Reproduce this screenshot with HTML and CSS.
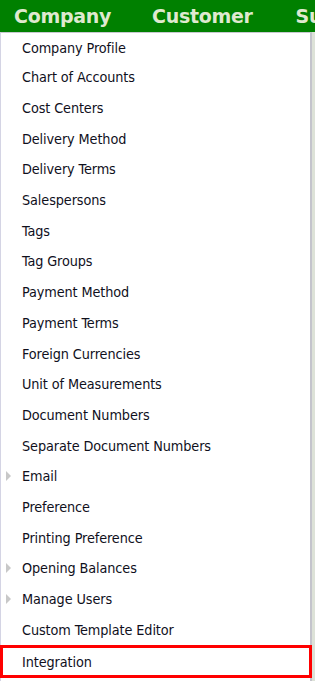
FILE: index.html
```html
<!DOCTYPE html>
<html>
<head>
<meta charset="utf-8">
<link rel="stylesheet" href="styles.css">
</head>
<body>
<div class="topbar">
  <span class="tab tab-company">Company</span>
  <span class="tab tab-customer">Customer</span>
  <span class="tab tab-su">Su</span>
</div>
<div class="stage">
  <ul class="menu">
    <li class="item">Company Profile</li>
    <li class="item">Chart of Accounts</li>
    <li class="item">Cost Centers</li>
    <li class="item">Delivery Method</li>
    <li class="item">Delivery Terms</li>
    <li class="item">Salespersons</li>
    <li class="item">Tags</li>
    <li class="item">Tag Groups</li>
    <li class="item">Payment Method</li>
    <li class="item">Payment Terms</li>
    <li class="item">Foreign Currencies</li>
    <li class="item">Unit of Measurements</li>
    <li class="item">Document Numbers</li>
    <li class="item">Separate Document Numbers</li>
    <li class="item sub"><span class="arrow"></span>Email</li>
    <li class="item">Preference</li>
    <li class="item">Printing Preference</li>
    <li class="item sub"><span class="arrow"></span>Opening Balances</li>
    <li class="item sub"><span class="arrow"></span>Manage Users</li>
    <li class="item">Custom Template Editor</li>
    <li class="item highlight">Integration</li>
  </ul>
</div>
</body>
</html>
```

FILE: styles.css
```css
html, body {
  margin: 0;
  padding: 0;
  background: #ffffff;
}
body {
  width: 315px;
  height: 681px;
  overflow: hidden;
  font-family: "DejaVu Sans Condensed", "DejaVu Sans", sans-serif;
}
.topbar {
  height: 32px;
  background: #008000;
  display: flex;
  align-items: center;
  white-space: nowrap;
  overflow: hidden;
}
.tab {
  font-family: "DejaVu Sans", sans-serif;
  font-weight: bold;
  font-size: 19px;
  color: #dfe9cf;
  letter-spacing: -0.3px;
}
.tab-company { margin-left: 14px; }
.tab-customer { margin-left: 41px; }
.tab-su { margin-left: 43px; }
.stage {
  background: #dde2d8;
  height: 649px;
  display: flex;
}
.menu {
  list-style: none;
  margin: 0;
  padding: 0 0 2px 0;
  width: 312px;
  background: #ffffff;
  border-top: 1px solid #c8c8d0;
  border-left: 1px solid #d4d4e4;
  border-right: 2px solid #c4c4cc;
  box-sizing: border-box;
}
.item {
  height: 30.7px;
  display: flex;
  align-items: center;
  padding-left: 21px;
  font-size: 14.3px;
  color: #10101c;
  position: relative;
  box-sizing: border-box;
  letter-spacing: -0.1px;
}
.item:first-child {
  height: 29px;
}
.arrow {
  position: absolute;
  left: 5px;
  top: 50%;
  margin-top: -5px;
  width: 0;
  height: 0;
  border-top: 5px solid transparent;
  border-bottom: 5px solid transparent;
  border-left: 5px solid #c8c8c8;
}
.highlight {
  border: 3px solid #ff0000;
  margin-left: -1px;
  margin-right: -2px;
  padding-left: 19px;
  height: 33px;
}
```
